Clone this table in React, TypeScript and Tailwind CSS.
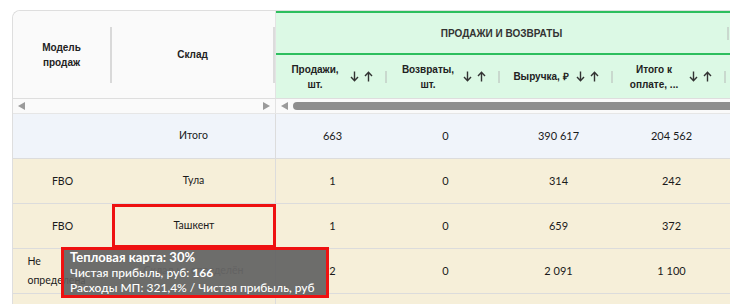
import { ReactNode } from "react"

const columns = [
  { label: ["Продажи,", "шт."] },
  { label: ["Возвраты,", "шт."] },
  { label: ["Выручка, ₽"] },
  { label: ["Итого к", "оплате, ..."] },
]

const rows = [
  { model: "", sklad: "Итого", values: ["663", "0", "390 617", "204 562"], total: true },
  { model: "FBO", sklad: "Тула", values: ["1", "0", "314", "242"] },
  { model: "FBO", sklad: "Ташкент", values: ["1", "0", "659", "372"], active: true },
  { model: "Не определена", sklad: "Склад не определён", values: ["2", "0", "2 091", "1 100"] },
  { model: "", sklad: "", values: ["", "", "", ""] },
]

const sans = "font-['Liberation_Sans',Arial,sans-serif]"
const lato = "font-['Lato','Liberation_Sans',sans-serif]"

function Arrows() {
  return (
    <div className="flex items-center gap-[5px] text-[#333]">
      <svg width="9" height="11" viewBox="0 0 9 11" fill="none" stroke="currentColor" strokeWidth="1.4">
        <path d="M4.5 0.5v9M1 6l3.5 3.8L8 6" />
      </svg>
      <svg width="9" height="11" viewBox="0 0 9 11" fill="none" stroke="currentColor" strokeWidth="1.4">
        <path d="M4.5 10.5v-9M1 5l3.5-3.8L8 5" />
      </svg>
    </div>
  )
}

function Tri({ dir }: { dir: "l" | "r" }) {
  return (
    <svg width="7" height="8" viewBox="0 0 7 8" className="shrink-0">
      <path d={dir === "l" ? "M7 0v8L0 4z" : "M0 0v8l7-4z"} fill="#9a9a9a" />
    </svg>
  )
}

function Cell({ children, className = "" }: { children: ReactNode; className?: string }) {
  return <div className={`flex shrink-0 items-center justify-center ${className}`}>{children}</div>
}

export default function App() {
  return (
    <div className="w-[730px] h-[304px] overflow-hidden bg-white pl-3 pt-[10px]">
      <div className="relative w-[760px] border-l border-t border-[#dedede] rounded-tl-lg">
        {/* header */}
        <div className="flex h-[88px] border-b border-[#dedede]">
          <div className="flex shrink-0 w-[263px] bg-[#fafafa] rounded-tl-lg border-r border-[#e3e3e3]">
            <div className="w-[99px] shrink-0 flex items-center">
              <div className={`flex-1 text-center text-[10px] leading-[15px] font-bold text-[#222] ${sans}`}>
                Модель
                <br />
                продаж
              </div>
              <div className="w-[2px] h-[56px] bg-[#d9d9d9]" />
            </div>
            <div className="flex-1 flex items-center">
              <div className={`flex-1 text-center text-[10px] font-bold text-[#222] ${sans}`}>Склад</div>
              <div className="w-[2px] h-[56px] bg-[#dcdcdc]" />
            </div>
          </div>
          <div className="flex-1 flex flex-col bg-[#dcf9e5]">
            <div className="h-[44px] border-t-2 border-b-2 border-[#2dbf5e] flex items-center">
              <div className={`w-[451px] text-center text-[10px] font-bold text-[#333] ${sans}`}>
                ПРОДАЖИ И ВОЗВРАТЫ
              </div>
              <div className="w-[2px] h-[13px] bg-[#c9d9ce]" />
            </div>
            <div className="flex flex-1">
              {columns.map((c) => (
                <div key={c.label[0]} className="w-[113px] shrink-0 flex items-center pl-[4px]">
                  <div className={`flex-1 text-center text-[10px] leading-[15px] font-bold text-[#222] ${sans}`}>
                    {c.label.map((l, i) => (
                      <div key={i}>{l}</div>
                    ))}
                  </div>
                  <Arrows />
                  <div className="ml-[12px] mr-[2px] w-[2px] h-[12px] bg-[#c9d9ce]" />
                </div>
              ))}
            </div>
          </div>
        </div>

        {/* scroll row */}
        <div className="flex h-[15px] border-b border-[#e6e6e6] bg-[#fafafa]">
          <div className="w-[263px] shrink-0 flex items-center justify-between px-[5px] border-r border-[#e3e3e3]">
            <Tri dir="l" />
            <Tri dir="r" />
          </div>
          <div className="flex-1 flex items-center pl-[5px] gap-[5px]">
            <Tri dir="l" />
            <div className="flex-1 h-[8px] rounded-full bg-[#8e8e8e]" />
          </div>
        </div>

        {/* rows */}
        {rows.map((r, idx) => (
          <div
            key={idx}
            className={`flex h-[45px] border-b border-[#dcdcdc] text-[#1a1a1a] ${r.total ? "bg-[#f0f4fa]" : "bg-[#f6efd9]"}`}
          >
            <Cell className={`w-[99px] text-[10.5px] leading-[19px] ${lato}`}>
              <div className={r.model.includes(" ") ? "text-left w-[70px]" : ""}>{r.model}</div>
            </Cell>
            <Cell
              className={`w-[164px] border-r border-[#dcdcdc] text-[10.5px] ${lato} ${
                r.active ? "outline-[3px] outline outline-[#ee1111] -outline-offset-[3px] border-l border-l-[#3a9be0]" : ""
              }`}
            >
              <span className={r.sklad.startsWith("Склад") ? "text-[#888]" : ""}>{r.sklad}</span>
            </Cell>
            {r.values.map((v, i) => (
              <Cell key={i} className={`w-[113px] text-[11px] ${lato}`}>
                {v}
              </Cell>
            ))}
          </div>
        ))}

        {/* heatmap tooltip */}
        <div
          className={`absolute left-[48px] top-[236px] w-[268px] h-[51px] border-[3px] border-[#ee1111] bg-[#5e5e5e]/90 px-[6px] text-[12px] leading-[15px] text-white ${lato}`}
        >
          <div className="font-bold text-[13px]">Тепловая карта: 30%</div>
          <div className="font-medium">
            Чистая прибыль, руб: <span className="font-bold">166</span>
          </div>
          <div className="font-medium">Расходы МП: 321,4% / Чистая прибыль, руб</div>
        </div>
      </div>
    </div>
  )
}
